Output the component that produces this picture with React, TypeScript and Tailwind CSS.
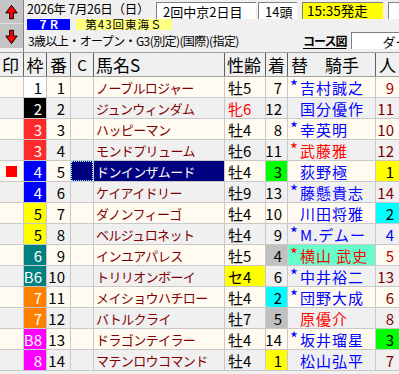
import React from "react";

type Row = {
  waku: string;
  wakuCls: string;
  ban: number;
  name: string;
  sex: string;
  sexCls?: string;
  prev: string;
  prevCls?: string;
  mark: string;
  jockey: string;
  jockeyCls?: string;
  pop: string;
  popCls?: string;
  selected?: boolean;
};

const rows: Row[] = [
  { waku: "1", wakuCls: "bg-white text-black", ban: 1, name: "ノーブルロジャー", sex: "牡5", prev: "7", mark: "*", jockey: "吉村誠之", pop: "9", popCls: "text-[#b00000]" },
  { waku: "2", wakuCls: "bg-black text-white", ban: 2, name: "ジュンウィンダム", sex: "牝6", sexCls: "text-[#ff0000]", prev: "12", mark: "", jockey: "国分優作", pop: "11" },
  { waku: "3", wakuCls: "bg-[#ff2a2a] text-white", ban: 3, name: "ハッピーマン", sex: "牡4", prev: "8", mark: "*", jockey: "幸英明", pop: "10" },
  { waku: "3", wakuCls: "bg-[#ff2a2a] text-white", ban: 4, name: "モンドプリューム", sex: "牡6", prev: "11", mark: "*", jockey: "武藤雅", jockeyCls: "text-[#ff0000]", pop: "12" },
  { waku: "4", wakuCls: "bg-[#0000ff] text-white", ban: 5, name: "ドンインザムード", sex: "牡4", prev: "3", prevCls: "bg-[#00ff00]", mark: "", jockey: "荻野極", pop: "1", popCls: "bg-[#ffff00] text-black", selected: true },
  { waku: "4", wakuCls: "bg-[#0000ff] text-white", ban: 6, name: "ケイアイドリー", sex: "牡9", prev: "13", mark: "*", jockey: "藤懸貴志", pop: "14" },
  { waku: "5", wakuCls: "bg-[#ffff00] text-black", ban: 7, name: "ダノンフィーゴ", sex: "牡4", prev: "10", mark: "", jockey: "川田将雅", pop: "2", popCls: "bg-[#00ffff] text-black" },
  { waku: "5", wakuCls: "bg-[#ffff00] text-black", ban: 8, name: "ベルジュロネット", sex: "牡4", prev: "9", mark: "*", jockey: "M.デムー", pop: "4", popCls: "text-[#0000ff]" },
  { waku: "6", wakuCls: "bg-[#008080] text-white", ban: 9, name: "インユアパレス", sex: "牡5", prev: "4", prevCls: "bg-[#c0c0c0]", mark: "*", jockey: "横山 武史", jockeyCls: "text-[#ff0000] bg-[#66ffcc]", pop: "5", popCls: "text-[#c00000]" },
  { waku: "B6", wakuCls: "bg-[#008080] text-white", ban: 10, name: "トリリオンボーイ", sex: "セ4", sexCls: "bg-[#ffff00]", prev: "6", mark: "*", jockey: "中井裕二", pop: "13" },
  { waku: "7", wakuCls: "bg-[#ff8000] text-white", ban: 11, name: "メイショウハチロー", sex: "牡4", prev: "2", prevCls: "bg-[#00ffff]", mark: "*", jockey: "団野大成", pop: "6" },
  { waku: "7", wakuCls: "bg-[#ff8000] text-white", ban: 12, name: "バトルクライ", sex: "牡7", prev: "5", prevCls: "bg-[#c0c0c0]", mark: "", jockey: "原優介", jockeyCls: "text-[#ff0000]", pop: "8" },
  { waku: "B8", wakuCls: "bg-[#ff00ff] text-white", ban: 13, name: "ドラゴンテイラー", sex: "牡4", prev: "14", mark: "*", jockey: "坂井瑠星", pop: "3", popCls: "bg-[#00ff00] text-black" },
  { waku: "8", wakuCls: "bg-[#ff00ff] text-white", ban: 14, name: "マテンロウコマンド", sex: "牡4", prev: "1", prevCls: "bg-[#ffff00]", mark: "", jockey: "松山弘平", pop: "7" },
];

const COLS = "grid grid-cols-[24px_23px_24px_23px_131px_41px_22px_88px_23px]";
const CELL = "h-[21px] border-b border-r border-[#c8c8c8] flex items-center overflow-hidden whitespace-nowrap leading-none";
const HEAD = "h-full border-r border-[#606060] flex items-center overflow-hidden whitespace-nowrap leading-none";

function Arrow({ down }: { down?: boolean }) {
  return (
    <svg width="24" height="24" viewBox="0 0 24 24">
      <polygon
        points={down ? "10,6 14,6 14,12 18,12 12,20 6,12 10,12" : "12,5 18,13 14,13 14,19 10,19 10,13 6,13"}
        fill="#ff0000"
        stroke="#000"
        strokeWidth="1"
      />
    </svg>
  );
}

function Box({ className, children }: { className: string; children?: React.ReactNode }) {
  return (
    <div
      className={`flex h-[17px] shrink-0 items-center overflow-hidden whitespace-nowrap leading-none border-t border-l border-[#808080] border-r-white border-b-white ${className}`}
    >
      {children}
    </div>
  );
}

export default function App() {
  return (
    <div className="h-[374px] w-[399px] overflow-hidden bg-[#f0f0f0] font-['Noto_Sans_CJK_JP',sans-serif] text-black">
      {/* top info panel */}
      <div className="flex h-[52px]">
        <div className="flex w-[24px] shrink-0 flex-col border-r border-[#808080]">
          <div className="flex h-[24px] items-center justify-center border-b border-[#e0e0e0] bg-[#c4c4c4]">
            <Arrow />
          </div>
          <div className="flex h-[24px] items-center justify-center bg-[#c4c4c4]">
            <Arrow down />
          </div>
        </div>
        <div className="flex min-w-0 flex-1 flex-col overflow-hidden">
          <div className="flex h-[19px] items-start pt-[2px]">
            <span className="ml-[3px] flex h-[15px] w-[129px] shrink-0 items-center whitespace-nowrap text-[12.5px] leading-none tracking-[-0.3px]">
              2026年 7月26日（日）
            </span>
            <Box className="w-[100px] bg-white pl-[6px] text-[13px]">2回中京2日目</Box>
            <Box className="ml-[2px] w-[39px] bg-white pl-[6px] text-[13px]">14頭</Box>
            <Box className="ml-[5px] w-[81px] bg-[#ffff00] pl-[4px] text-[13.5px]">15:35発走</Box>
            <Box className="ml-[5px] w-[20px] bg-white" />
          </div>
          <div className="flex h-[12px] items-start">
            <div className="ml-[3px] flex h-[11px] w-[43px] items-center justify-center bg-[#0000ff] text-[11px] font-bold leading-none text-white">
              ７Ｒ
            </div>
            <div className="ml-[6px] flex h-[11px] w-[96px] items-center justify-center bg-[#ffff80] text-[11.5px] leading-none tracking-[1px]">
              第43回東海Ｓ
            </div>
          </div>
          <div className="flex h-[19px] items-center">
            <span className="ml-[4px] w-[275px] shrink-0 whitespace-nowrap text-[12px] leading-none tracking-[-0.6px]">
              3歳以上・オープン・G3(別定)(国際)(指定)
            </span>
            <span className="shrink-0 whitespace-nowrap text-[12px] font-bold leading-none tracking-[-1px] underline underline-offset-2">
              コース図
            </span>
            <Box className="ml-[5px] w-[60px] bg-white pl-[30px] text-[13px]">ダー</Box>
          </div>
        </div>
      </div>

      {/* header */}
      <div className={`${COLS} h-[25px] border-t border-b border-[#a0a0a0] text-[17px]`}>
        <div className={`${HEAD} pl-[2px]`}>印</div>
        <div className={`${HEAD} justify-center`}>枠</div>
        <div className={`${HEAD} justify-center`}>番</div>
        <div className={`${HEAD} justify-center text-[15px]`}>C</div>
        <div className={`${HEAD} pl-[2px]`}>馬名S</div>
        <div className={`${HEAD} pl-[2px]`}>性齢</div>
        <div className={`${HEAD} justify-center`}>着</div>
        <div className={`${HEAD} pl-[3px]`}>替　騎手</div>
        <div className="flex h-full items-center justify-center leading-none">人</div>
      </div>

      {/* entries */}
      {rows.map((r, i) => {
        const bg = i % 2 === 0 ? "bg-[#fffbf0]" : "bg-[#f0f0f0]";
        return (
          <div key={r.ban} className={`${COLS} ${bg}`}>
            <div className={`${CELL} pl-[6px]`}>
              {r.selected && <div className="h-[11px] w-[11px] bg-[#ff0000]" />}
            </div>
            <div className={`${CELL} justify-end pr-[4px] text-[15px] ${r.wakuCls}`}>{r.waku}</div>
            <div className={`${CELL} justify-end pr-[5px] text-[15px]`}>{r.ban}</div>
            <div className={CELL}>
              {r.selected && <div className="h-full w-full border border-dotted border-[#80ffff] bg-[#000080]" />}
            </div>
            <div
              className={`${CELL} pl-[2px] text-[13px] tracking-[-0.6px] ${
                r.selected ? "bg-[#000080] text-white" : "text-[#800000]"
              }`}
            >
              {r.name}
            </div>
            <div className={`${CELL} pl-[3px] text-[15px] ${r.sexCls ?? ""}`}>{r.sex}</div>
            <div className={`${CELL} justify-end pr-[5px] text-[15px] ${r.prevCls ?? ""}`}>{r.prev}</div>
            <div className={`${CELL} text-[15px] ${r.jockeyCls ?? "text-[#0000ff]"}`}>
              <span className="mb-[3px] w-[12px] shrink-0 text-center text-[17px] leading-none">{r.mark}</span>
              <span className="tracking-[1px]">{r.jockey}</span>
            </div>
            <div className={`${CELL} justify-end border-r-0 pr-[5px] text-[15px] ${r.popCls ?? "text-[#800000]"}`}>
              {r.pop}
            </div>
          </div>
        );
      })}
    </div>
  );
}
